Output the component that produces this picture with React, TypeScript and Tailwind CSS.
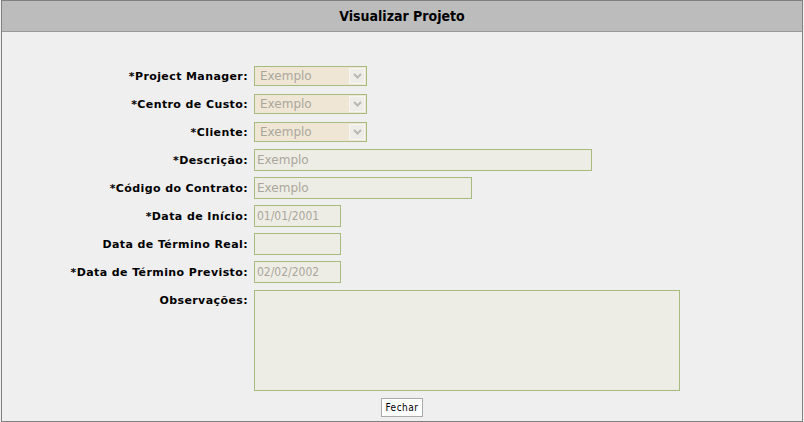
import React from "react";

const labelCls =
  "w-[246px] text-right pr-0 font-bold text-[11px] tracking-[0.4px] text-black leading-none";

function Label({ children }: { children: React.ReactNode }) {
  return (
    <div className={labelCls} style={{ fontFamily: '"DejaVu Sans", Verdana, sans-serif' }}>
      {children}
    </div>
  );
}

function SelectBox() {
  return (
    <div className="w-[113px] h-[20px] border border-[#a7bb7e] bg-[#efe6d6] flex items-center justify-between pl-[5px] pr-[1px]">
      <span
        className="text-[12px] text-[#aaa69c] leading-none"
        style={{ fontFamily: '"DejaVu Sans", Verdana, sans-serif' }}
      >
        Exemplo
      </span>
      <div className="w-[16px] h-[16px] bg-[#eeede8] border border-[#f6f5f2] flex items-center justify-center">
        <svg width="9" height="6" viewBox="0 0 9 6">
          <path d="M1 1 L4.5 4.5 L8 1" stroke="#b8b8b4" strokeWidth="2" fill="none" />
        </svg>
      </div>
    </div>
  );
}

function TextBox({ w, value, cond }: { w: string; value?: string; cond?: boolean }) {
  return (
    <div
      className={`${w} h-[22px] border border-[#a7bb7e] bg-[#eeede5] flex items-center pl-[2px] text-[12px] text-[#aaa69c] leading-none`}
      style={{
        fontFamily: cond
          ? '"DejaVu Sans Condensed", "DejaVu Sans", sans-serif'
          : '"DejaVu Sans", Verdana, sans-serif',
      }}
    >
      {value}
    </div>
  );
}

export default function App() {
  return (
    <div className="w-[804px] h-[422px] bg-[#efefef]">
      <div className="ml-[1px] w-[802px] h-[422px] border border-[#808080] flex flex-col">
        <div className="h-[31px] bg-[#bcbcbc] border-b border-[#999999] flex items-center justify-center">
          <span
            className="text-[14px] font-bold text-black"
            style={{ fontFamily: '"DejaVu Sans Condensed", "Liberation Sans Narrow", sans-serif' }}
          >
            Visualizar Projeto
          </span>
        </div>

        <div className="flex flex-col pt-[34px]">
          <div className="flex items-center gap-[6px]">
            <Label>*Project Manager:</Label>
            <SelectBox />
          </div>
          <div className="flex items-center gap-[6px] mt-[8px]">
            <Label>*Centro de Custo:</Label>
            <SelectBox />
          </div>
          <div className="flex items-center gap-[6px] mt-[8px]">
            <Label>*Cliente:</Label>
            <SelectBox />
          </div>
          <div className="flex items-center gap-[6px] mt-[7px]">
            <Label>*Descrição:</Label>
            <TextBox w="w-[338px]" value="Exemplo" />
          </div>
          <div className="flex items-center gap-[6px] mt-[6px]">
            <Label>*Código do Contrato:</Label>
            <TextBox w="w-[218px]" value="Exemplo" />
          </div>
          <div className="flex items-center gap-[6px] mt-[6px]">
            <Label>*Data de Início:</Label>
            <TextBox w="w-[87px]" value="01/01/2001" cond />
          </div>
          <div className="flex items-center gap-[6px] mt-[6px]">
            <Label>Data de Término Real:</Label>
            <TextBox w="w-[87px]" />
          </div>
          <div className="flex items-center gap-[6px] mt-[6px]">
            <Label>*Data de Término Previsto:</Label>
            <TextBox w="w-[87px]" value="02/02/2002" cond />
          </div>
          <div className="flex items-start gap-[6px] mt-[7px]">
            <div className="pt-[5px]">
              <Label>Observações:</Label>
            </div>
            <div className="w-[426px] h-[101px] border border-[#a7bb7e] bg-[#eeede5]" />
          </div>
          <div className="flex mt-[7px] pl-[379px]">
            <button
              className="w-[42px] h-[19px] bg-white border border-[#aaaaaa] text-[10px] text-black tracking-[0.5px] leading-none flex items-center justify-center"
              style={{ fontFamily: '"DejaVu Sans Condensed", "DejaVu Sans", sans-serif' }}
            >
              Fechar
            </button>
          </div>
        </div>
      </div>
    </div>
  );
}
